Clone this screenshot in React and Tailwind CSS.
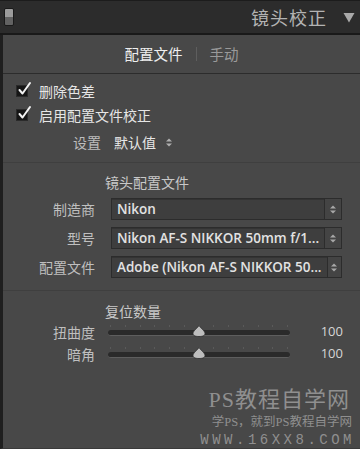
import React from 'react';

const cjk = '"Noto Sans CJK SC", "Noto Sans", sans-serif';

function UpDown({ className = '' }) {
    return (
        <svg width="8" height="11" viewBox="0 0 8 11" className={className}>
            <path d="M1 4.5 L4 1.5 L7 4.5 Z" fill="currentColor" />
            <path d="M1 6.5 L4 9.5 L7 6.5 Z" fill="currentColor" />
        </svg>
    );
}

function Check() {
    return (
        <div className="relative w-[12px] h-[12px] bg-[#161616] border border-[#2a2a2a]">
            <svg width="16" height="16" viewBox="0 0 16 16" className="absolute left-[0px] top-[-5px]">
                <path d="M2.5 9 L5.5 12.5 L13 2" stroke="#f2f2f2" strokeWidth="2" fill="none" strokeLinecap="round" strokeLinejoin="round" />
            </svg>
        </div>
    );
}

function SelectRow({ label, value }) {
    return (
        <div className="flex items-center h-[22px]">
            <div className="w-[92px] text-right text-[14px] text-[#bfbfbf]">{label}</div>
            <div className="ml-[16px] w-[231px] h-[22px] flex border border-[#2c2c2c] bg-[#3e3e3e] shadow-[inset_0_1px_0_#333]">
                <div className="flex-1 flex items-center px-[5px] text-[13.5px] font-semibold text-[#e2e2e2] whitespace-nowrap" style={{ fontFamily: '"Open Sans", "Noto Sans", sans-serif' }}>
                    {value}
                </div>
                <div className="w-[17px] flex items-center justify-center border-l border-[#2c2c2c] bg-[#444] text-[#a8a8a8]">
                    <UpDown />
                </div>
            </div>
        </div>
    );
}

function SliderRow({ label, value }) {
    const ticks = [0, 1, 2, 3, 4, 5, 6, 7, 8, 9, 10, 11, 12];
    return (
        <div className="flex items-center h-[22px]">
            <div className="w-[92px] text-right text-[14px] text-[#bfbfbf]">{label}</div>
            <div className="relative ml-[13px] w-[182px] h-[22px]">
                <div className="absolute left-[2px] right-[2px] top-[4px] flex justify-between">
                    {ticks.map((t) => (
                        <div key={t} className="w-px h-[2px] bg-[#5a5a5a]" />
                    ))}
                </div>
                <div className="absolute left-0 right-0 top-[9px] h-[6px] rounded-full bg-[#2a2a2a] border-b border-[#5e5e5e]" />
                <svg width="14" height="12" viewBox="0 0 14 12" className="absolute left-[84px] top-[4px]">
                    <path d="M7 0.5 C8.5 3 13 6 13 8.5 C13 10.5 11 11.5 7 11.5 C3 11.5 1 10.5 1 8.5 C1 6 5.5 3 7 0.5 Z" fill="#bdbdbd" stroke="#2a2a2a" strokeWidth="0.8" />
                </svg>
            </div>
            <div className="ml-auto mr-[17px] text-[13px] text-[#d6d6d6]" style={{ fontFamily: '"Open Sans", sans-serif' }}>{value}</div>
        </div>
    );
}

export default function App() {
    return (
        <div className="relative w-[360px] h-[449px] bg-[#484848] overflow-hidden flex flex-col" style={{ fontFamily: cjk }}>
            <div className="h-[35px] flex items-center bg-[#2c2c2c] border-t border-[#1c1c1c] border-b-2 border-b-[#191919]">
                <div className="ml-[4px] w-[10px] h-[18px] rounded-[2px] border border-[#1a1a1a] flex flex-col overflow-hidden">
                    <div className="flex-1 bg-[#9c9c9c]" />
                    <div className="flex-1 bg-[#626262]" />
                </div>
                <div className="ml-auto text-[18px] text-[#b3b3b3] tracking-[1px]">镜头校正</div>
                <svg width="12" height="11" viewBox="0 0 12 11" className="ml-[16px] mr-[5px]">
                    <path d="M0.5 1 L11.5 1 L6 10.5 Z" fill="#a9a9a9" />
                </svg>
            </div>

            <div className="flex-1 flex flex-col border-l-[3px] border-[#1f1f1f] border-b border-b-[#3a3a3a]">
                <div className="h-[39px] flex items-center justify-center border-b border-[#2c2c2c] text-[14.5px]">
                    <span className="text-[#efefef]">配置文件</span>
                    <span className="mx-[13px] w-px h-[14px] bg-[#5e5e5e]" />
                    <span className="text-[#9a9a9a]">手动</span>
                </div>

                <div className="pt-[5px] pb-[8px] border-b border-[#3f3f3f]">
                    <div className="flex items-center h-[24px] pl-[13px] gap-[11px] text-[14px] text-[#e6e6e6]">
                        <Check />
                        <span>删除色差</span>
                    </div>
                    <div className="flex items-center h-[24px] pl-[13px] gap-[11px] text-[14px] text-[#e6e6e6]">
                        <Check />
                        <span>启用配置文件校正</span>
                    </div>
                    <div className="flex items-center h-[24px] mt-[3px] text-[14px]">
                        <span className="ml-[70px] text-[#bdbdbd]">设置</span>
                        <span className="ml-[13px] text-[#e6e6e6]">默认值</span>
                        <UpDown className="ml-[9px] text-[#b0b0b0]" />
                    </div>
                </div>

                <div className="pb-[12px] border-b border-[#3f3f3f]">
                    <div className="mt-[9px] h-[20px] flex items-center pl-[102px] text-[14px] text-[#c8c8c8]">镜头配置文件</div>
                    <div className="mt-[6px] flex flex-col gap-[7px]">
                        <SelectRow label="制造商" value="Nikon" />
                        <SelectRow label="型号" value="Nikon AF-S NIKKOR 50mm f/1..." />
                        <SelectRow label="配置文件" value="Adobe (Nikon AF-S NIKKOR 50..." />
                    </div>
                </div>

                <div>
                    <div className="mt-[10px] h-[20px] flex items-center pl-[102px] text-[14px] text-[#c8c8c8]">复位数量</div>
                    <SliderRow label="扭曲度" value="100" />
                    <SliderRow label="暗角" value="100" />
                </div>
            </div>

            <div className="absolute right-[8px] bottom-[2px] flex flex-col items-end text-[#8f8f8f] leading-none">
                <div className="text-[22px] tracking-[1px] mr-[2px]" style={{ fontFamily: '"Liberation Serif", "Noto Sans CJK SC", serif' }}>PS教程自学网</div>
                <div className="mt-[5px] text-[12.5px]" style={{ fontFamily: '"Liberation Serif", "Noto Sans CJK SC", serif' }}>学PS，就到PS教程自学网</div>
                <div className="mt-[5px] text-[14px] tracking-[3.5px] mr-[-3px]" style={{ fontFamily: '"Liberation Mono", monospace' }}>WWW.16XX8.COM</div>
            </div>
        </div>
    );
}
